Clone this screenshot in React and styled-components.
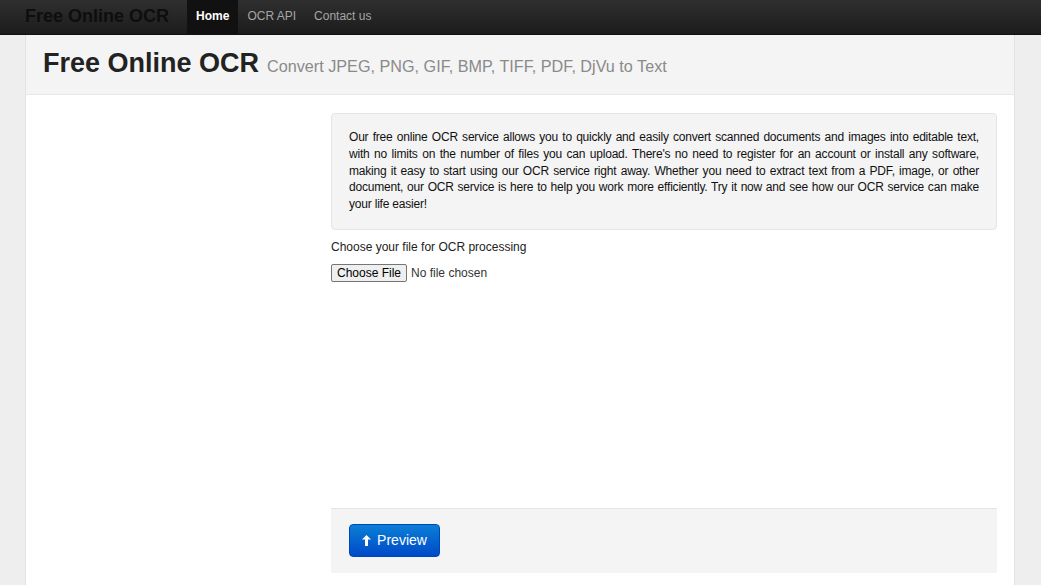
import React from 'react';
import styled, { createGlobalStyle } from 'styled-components';

const GlobalStyle = createGlobalStyle`
  html, body {
    margin: 0;
    padding: 0;
    background: #eeeeee;
    font-family: "Liberation Sans", Arial, sans-serif;
    color: #333;
  }
`;

const Navbar = styled.div`
  height: 35px;
  background: linear-gradient(to bottom, #2f2f2f, #1c1c1c);
  border-bottom: 1px solid #111;
  box-sizing: border-box;
  display: flex;
  align-items: stretch;
  padding-left: 25px;
`;

const Brand = styled.a`
  font-size: 18px;
  font-weight: bold;
  color: #0e0e0e;
  text-decoration: none;
  display: flex;
  align-items: center;
  padding-bottom: 2px;
  margin-right: 18px;
`;

const NavItem = styled.a`
  font-size: 12px;
  font-weight: ${p => (p.active ? 'bold' : 'normal')};
  color: ${p => (p.active ? '#fff' : '#a6a6a6')};
  background: ${p => (p.active ? '#111' : 'transparent')};
  padding: 0 9px;
  display: flex;
  align-items: center;
  padding-bottom: 3px;
  text-decoration: none;
`;

const Container = styled.div`
  margin: 0 25px;
  width: 990px;
  background: #fff;
  border-left: 1px solid #e2e2e2;
  border-right: 1px solid #e2e2e2;
  box-sizing: border-box;
  min-height: 550px;
`;

const Header = styled.div`
  background: #f4f4f4;
  border-bottom: 1px solid #e8e8e8;
  height: 60px;
  box-sizing: border-box;
  padding: 13px 17px 0;
  display: flex;
  align-items: baseline;
  gap: 8px;
`;

const Title = styled.h1`
  margin: 0;
  font-size: 27px;
  font-weight: bold;
  color: #222;
`;

const Subtitle = styled.small`
  font-size: 16.2px;
  color: #8a8a8a;
`;

const Body = styled.div`
  display: grid;
  grid-template-columns: 288px 666px;
  padding: 18px 0 0 17px;
`;

const Main = styled.div`
  display: flex;
  flex-direction: column;
`;

const Well = styled.div`
  background: #f4f4f4;
  border: 1px solid #e5e5e5;
  border-radius: 4px;
  padding: 15px 17px 16px;
  font-size: 12px;
  letter-spacing: -0.2px;
  line-height: 16.8px;
  color: #111;
  text-align: justify;
`;

const Label = styled.div`
  font-size: 12px;
  color: #222;
  margin-top: 10px;
`;

const FileRow = styled.div`
  display: flex;
  align-items: center;
  gap: 4px;
  margin-top: 10px;
  font-size: 12px;
  color: #333;
`;

const FileButton = styled.button`
  font-family: "Liberation Sans", Arial, sans-serif;
  font-size: 12px;
  color: #000;
  background: #efefef;
  border: 1px solid #767676;
  border-radius: 2px;
  padding: 1px 5px;
  height: 18px;
  line-height: 14px;
`;

const Actions = styled.div`
  margin-top: 226px;
  background: #f4f4f4;
  border-top: 1px solid #e5e5e5;
  height: 65px;
  box-sizing: border-box;
  padding: 15px 18px;
`;

const PrimaryButton = styled.button`
  font-family: "Liberation Sans", Arial, sans-serif;
  font-size: 14px;
  color: #fff;
  height: 33px;
  width: 91px;
  border: 1px solid #0046b8;
  border-radius: 4px;
  background: linear-gradient(to bottom, #0a7fd6, #0049c8);
  display: flex;
  align-items: center;
  justify-content: center;
  gap: 6px;
  padding: 0;
`;

const UpArrow = () => (
  <svg width="9" height="11" viewBox="0 0 9 11">
    <path d="M4.5 0 L9 4.5 L6 4.5 L6 11 L3 11 L3 4.5 L0 4.5 Z" fill="#fff" />
  </svg>
);

export default function App() {
  return (
    <>
      <GlobalStyle />
      <Navbar>
        <Brand href="#">Free Online OCR</Brand>
        <NavItem active href="#">Home</NavItem>
        <NavItem href="#">OCR API</NavItem>
        <NavItem href="#">Contact us</NavItem>
      </Navbar>
      <Container>
        <Header>
          <Title>Free Online OCR</Title>
          <Subtitle>Convert JPEG, PNG, GIF, BMP, TIFF, PDF, DjVu to Text</Subtitle>
        </Header>
        <Body>
          <div />
          <Main>
            <Well>
              Our free online OCR service allows you to quickly and easily convert scanned documents and images into editable text,
              with no limits on the number of files you can upload. There's no need to register for an account or install any software,
              making it easy to start using our OCR service right away. Whether you need to extract text from a PDF, image, or other
              document, our OCR service is here to help you work more efficiently. Try it now and see how our OCR service can make
              your life easier!
            </Well>
            <Label>Choose your file for OCR processing</Label>
            <FileRow>
              <FileButton>Choose File</FileButton>
              <span>No file chosen</span>
            </FileRow>
            <Actions>
              <PrimaryButton>
                <UpArrow />
                Preview
              </PrimaryButton>
            </Actions>
          </Main>
        </Body>
      </Container>
    </>
  );
}
